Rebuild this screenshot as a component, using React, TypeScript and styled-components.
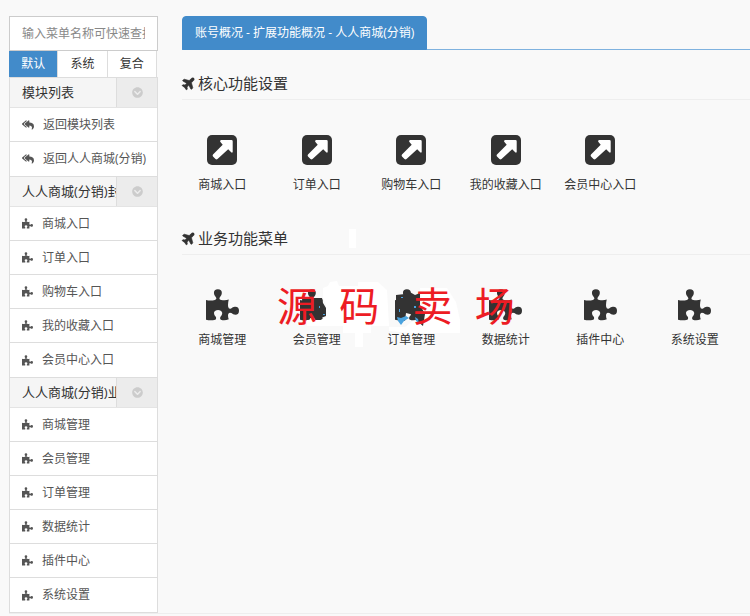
import React from "react";
import styled, { createGlobalStyle } from "styled-components";
import { FaChevronCircleDown, FaPlane, FaReplyAll } from "react-icons/fa";

const GlobalStyle = createGlobalStyle`
  * { box-sizing: border-box; }
  body {
    margin: 0;
    background: #f9f9f9;
    color: #333;
    font: 12px/18px "Open Sans", "Noto Sans CJK SC", sans-serif;
  }
  button, input { font: inherit; }
  a { color: inherit; text-decoration: none; }
`;

const Page = styled.div`
  position: relative;
  padding: 16px 0 0 9px;
  overflow: hidden;
`;

const Columns = styled.div`
  display: flex;
  gap: 24px;
  border-bottom: 1px solid #eee;
`;

const Sidebar = styled.aside`
  flex: 0 0 149px;
  min-width: 0;
`;

const Search = styled.input`
  display: block;
  width: 100%;
  height: 35px;
  padding: 0 12px;
  border: 1px solid #ccc;
  border-radius: 0;
  background: #fff;
  &::placeholder { color: #888; opacity: 1; }
`;

const ModeBar = styled.div`
  display: flex;
  height: 26px;
  margin-right: 1px;
`;

const ModeButton = styled.button<{ $active?: boolean }>`
  flex: 1;
  padding: 0;
  border: 0;
  border-right: 1px solid #ddd;
  background: ${(p) => (p.$active ? "#428bca" : "#fff")};
  color: ${(p) => (p.$active ? "#fff" : "#333")};
`;

const Menu = styled.nav`
  border: solid #ddd;
  border-width: 0 1px 1px;
  background: #fff;
`;

const GroupHead = styled.div`
  display: flex;
  height: 31px;
  border-top: 1px solid #ddd;
  border-bottom: 1px solid #e4e4e4;
  background: #f5f5f5;
`;

const GroupTitle = styled.h2`
  flex: 1;
  min-width: 0;
  margin: 0;
  padding-left: 12px;
  overflow: hidden;
  white-space: nowrap;
  font-size: 13px;
  font-weight: 400;
  line-height: 29px;
`;

const Collapse = styled.button`
  display: grid;
  place-items: center;
  width: 41px;
  padding: 0;
  border: 0;
  border-left: 1px solid #ddd;
  background: #ececec;
  color: #ccc;
`;

const MenuList = styled.ul`
  margin: 0;
  padding: 0;
  list-style: none;
`;

const MenuLink = styled.a`
  display: flex;
  align-items: center;
  gap: 9px;
  height: 34px;
  padding-left: 12px;
  border-bottom: 1px solid #ddd;
  color: #555;
  white-space: nowrap;
  li:last-child > & { border-bottom: 0; }
`;

const Main = styled.main`
  flex: 1;
  min-width: 0;
`;

const TabBar = styled.div`
  display: flex;
  height: 34px;
  border-bottom: 1px solid #7fb2df;
`;

const Tab = styled.a`
  height: 34px;
  padding: 0 12px;
  border: 1px solid #428bca;
  border-radius: 4px 4px 0 0;
  background: #428bca;
  color: #fff;
  line-height: 32px;
  white-space: nowrap;
`;

const Section = styled.section`
  height: 155px;
  padding-top: 16px;
`;

const SectionTitle = styled.h1`
  display: flex;
  align-items: center;
  gap: 2px;
  height: 34px;
  margin: 0;
  border-bottom: 1px solid #eee;
  font-size: 15px;
  font-weight: 400;
  line-height: 18px;
`;

const PlaneIcon = styled(FaPlane)`
  transform: rotate(-45deg);
  stroke: currentColor;
  stroke-width: 24px;
`;

const Tiles = styled.div`
  display: grid;
  grid-template-columns: repeat(6, 1fr);
  margin: 34px 8px 0 -7px;
`;

const Tile = styled.a`
  display: flex;
  flex-direction: column;
  align-items: center;
  gap: 10px;
  white-space: nowrap;
  svg { height: 32px; }
`;

const Patches = styled.svg`
  position: absolute;
  left: 270px;
  top: 220px;
  pointer-events: none;
`;

const Watermark = styled.div`
  position: absolute;
  left: 277px;
  top: 277px;
  color: #ed1c24;
  font: 40px/60px "Liberation Sans", "Noto Sans CJK SC", sans-serif;
  white-space: pre;
  pointer-events: none;
`;

const Puzzle = ({ size }: { size: number }) => (
  <svg width={size} height={size} viewBox="0 0 100 95" fill="currentColor" aria-hidden>
    <path d="M0 32Q14 36 27 32Q34 30 30 24Q24 18 24 11A12 11 0 0 1 48 11Q48 18 42 24Q38 31 46 32Q58 35 69 31Q66 42 67 52Q69 62 76 58Q82 52 89 53A11 12 0 0 1 89 77Q82 77 77 72Q69 68 67 76Q66 84 69 91Q56 96 45 92Q41 89 44 83Q50 77 49 71A13 12 0 0 0 24 71Q24 78 30 84Q32 90 28 92Q14 96 0 92Z" />
  </svg>
);

const ArrowSquare = () => (
  <svg width="30" height="30" viewBox="0 0 30 30" aria-hidden>
    <rect width="30" height="30" rx="5" fill="#333" />
    <path d="M14 5h10.500q1.200 0 1.200 1.200v10.800q-.5 1.200-1.500.3l-3-3L10.500 24q-1 .8-2 0L6 21.500q-.8-1 0-2l9.700-9.700-2.500-3q-.5-1.300.8-1.800z" fill="#fff" />
  </svg>
);

const entries = ["商城入口", "订单入口", "购物车入口", "我的收藏入口", "会员中心入口"];
const business = ["商城管理", "会员管理", "订单管理", "数据统计", "插件中心", "系统设置"];

const groups = [
  { title: "模块列表", back: true, items: ["返回模块列表", "返回人人商城(分销)"] },
  { title: "人人商城(分销)封", back: false, items: entries },
  { title: "人人商城(分销)业", back: false, items: business },
];

export default function App() {
  return (
    <Page>
      <GlobalStyle />
      <Columns>
        <Sidebar>
          <Search type="text" aria-label="查找菜单" placeholder="输入菜单名称可快速查找" />
          <ModeBar>
            <ModeButton $active>默认</ModeButton>
            <ModeButton>系统</ModeButton>
            <ModeButton>复合</ModeButton>
          </ModeBar>
          <Menu>
            {groups.map((g) => (
              <div key={g.title}>
                <GroupHead>
                  <GroupTitle>{g.title}</GroupTitle>
                  <Collapse aria-label={g.title}>
                    <FaChevronCircleDown size={11} />
                  </Collapse>
                </GroupHead>
                <MenuList>
                  {g.items.map((t) => (
                    <li key={t}>
                      <MenuLink href="#">
                        {g.back ? <FaReplyAll size={12} /> : <Puzzle size={11} />}
                        {t}
                      </MenuLink>
                    </li>
                  ))}
                </MenuList>
              </div>
            ))}
          </Menu>
        </Sidebar>
        <Main>
          <TabBar>
            <Tab href="#">账号概况 - 扩展功能概况 - 人人商城(分销)</Tab>
          </TabBar>
          <Section>
            <SectionTitle>
              <PlaneIcon size={14} />
              核心功能设置
            </SectionTitle>
            <Tiles>
              {entries.map((t) => (
                <Tile href="#" key={t}>
                  <ArrowSquare />
                  {t}
                </Tile>
              ))}
            </Tiles>
          </Section>
          <Section>
            <SectionTitle>
              <PlaneIcon size={14} />
              业务功能菜单
            </SectionTitle>
            <Tiles>
              {business.map((t) => (
                <Tile href="#" key={t}>
                  <Puzzle size={33} />
                  {t}
                </Tile>
              ))}
            </Tiles>
          </Section>
        </Main>
      </Columns>
      <Patches width="200" height="130" viewBox="270 220 200 130" aria-hidden>
        <path d="M302 298h20l1 5 3 5v8l-5 2h-18z" fill="#333" />
        <g fill="#fff">
          <path d="M349 229h7v19h-7z" />
          <path d="M323 288l5-2 2-4 7-1 2 5h19v-4h20l9 8 2 36h-18v7h-8v14h-8v-14h-12v-7h-36v-6h14l5-3v-12l-3-7z" />
          <path d="M420 288h27l9 14 4 18v13h-48l-23-2v-4h16l8-6 7 2 2-22z" />
        </g>
        <path d="M396 295l9-1 3-3 7 4 5-2v12l5 9-2 12-6-5-3-6-8-2-1 8-9-5z" fill="#333" />
        <g fill="#4aa3df">
          <path d="M319 306h1v2h-1zM323 314h2v1h-2zM397 317l4 1 5-2 3 2-5 3-3 4-3-4zM415 317l3 2 1 4-3-2zM401 297h2v1h-2zM414 306h2v2h-2zM399 309h1v3h-1z" />
        </g>
      </Patches>
      <Watermark aria-hidden>{"源  码   卖  场"}</Watermark>
    </Page>
  );
}
